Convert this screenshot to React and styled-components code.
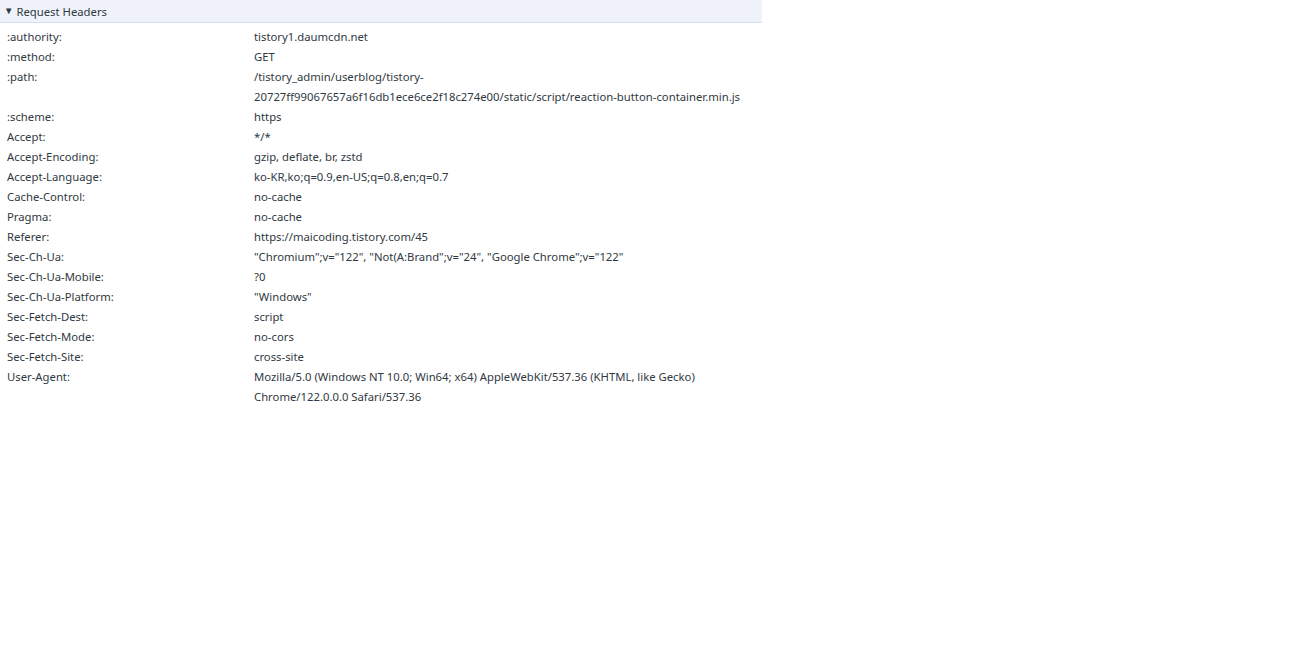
import React from 'react';
import styled, { createGlobalStyle } from 'styled-components';

const GlobalStyle = createGlobalStyle`
  body {
    margin: 0;
    background: #fff;
    font-family: "Noto Sans", "Open Sans", sans-serif;
  }
`;

const Panel = styled.div`
  width: 762px;
  font-size: 11.3px;
  color: #303942;
`;

const SectionHeader = styled.div`
  display: flex;
  align-items: center;
  gap: 3px;
  height: 22px;
  padding-left: 4px;
  background: #eff3f9;
  border-bottom: 1px solid #d3e0f1;
  color: #303942;
`;

const Arrow = styled.span`
  font-size: 9.5px;
  line-height: 1;
`;

const Rows = styled.div`
  padding-top: 4px;
`;

const Row = styled.div`
  display: grid;
  grid-template-columns: 247px 1fr;
  padding-left: 7px;
  line-height: 20px;
`;

const Key = styled.div``;

const Value = styled.div`
  word-break: break-all;
  padding-right: 8px;
`;

const headers = [
  [':authority:', 'tistory1.daumcdn.net'],
  [':method:', 'GET'],
  [':path:', ['/tistory_admin/userblog/tistory-', '20727ff99067657a6f16db1ece6ce2f18c274e00/static/script/reaction-button-container.min.js']],
  [':scheme:', 'https'],
  ['Accept:', '*/*'],
  ['Accept-Encoding:', 'gzip, deflate, br, zstd'],
  ['Accept-Language:', 'ko-KR,ko;q=0.9,en-US;q=0.8,en;q=0.7'],
  ['Cache-Control:', 'no-cache'],
  ['Pragma:', 'no-cache'],
  ['Referer:', 'https://maicoding.tistory.com/45'],
  ['Sec-Ch-Ua:', '"Chromium";v="122", "Not(A:Brand";v="24", "Google Chrome";v="122"'],
  ['Sec-Ch-Ua-Mobile:', '?0'],
  ['Sec-Ch-Ua-Platform:', '"Windows"'],
  ['Sec-Fetch-Dest:', 'script'],
  ['Sec-Fetch-Mode:', 'no-cors'],
  ['Sec-Fetch-Site:', 'cross-site'],
  ['User-Agent:', ['Mozilla/5.0 (Windows NT 10.0; Win64; x64) AppleWebKit/537.36 (KHTML, like Gecko)', 'Chrome/122.0.0.0 Safari/537.36']],
];

const App = () => {
  return (
    <>
      <GlobalStyle />
      <Panel>
        <SectionHeader>
          <Arrow>▼</Arrow>
          <span>Request Headers</span>
        </SectionHeader>
        <Rows>
          {headers.map(([k, v]) => (
            <Row key={k}>
              <Key>{k}</Key>
              <Value>
                {Array.isArray(v) ? v.map((line) => <div key={line}>{line}</div>) : v}
              </Value>
            </Row>
          ))}
        </Rows>
      </Panel>
    </>
  );
};

export default App;
